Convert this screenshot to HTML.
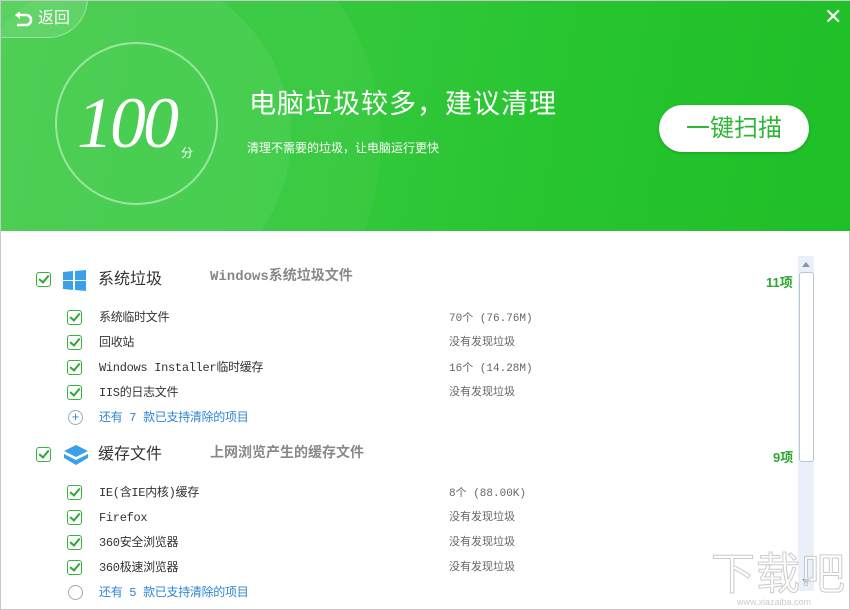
<!DOCTYPE html>
<html><head><meta charset="utf-8"><style>
*{margin:0;padding:0;box-sizing:border-box}
body{width:850px;height:610px;overflow:hidden;background:#fff;font-family:"Liberation Sans","Noto Sans CJK SC",sans-serif;position:relative;border:1px solid #c8c8c8;line-height:1}
.hd{position:absolute;left:0;top:0;width:850px;height:230px;background:linear-gradient(100deg,#3ccb44 0%,#33c83b 40%,#26c42e 70%,#1fbf28 100%);overflow:hidden}
.abs{position:absolute}
.cb{position:absolute;width:15px;height:15px;border:1px solid #35b53c;border-radius:3px;background:#fff}
.cb:after{content:"";position:absolute;left:4px;top:0px;width:4px;height:8px;border:solid #2aa830;border-width:0 2.5px 2.5px 0;transform:rotate(40deg)}
.t{position:absolute;font-size:12px;color:#333;font-family:"Liberation Mono","Noto Sans CJK SC",monospace;letter-spacing:-0.3px}
.g{position:absolute;font-size:11px;color:#666;font-family:"Liberation Mono","Noto Sans CJK SC",monospace}
</style></head><body>
<div class="hd">
 <div class="abs" style="left:-40px;top:-30px;width:330px;height:330px;border-radius:50%;background:rgba(255,255,255,0.06)"></div>
 <div class="abs" style="left:-120px;top:-110px;width:500px;height:500px;border-radius:50%;background:rgba(255,255,255,0.04)"></div>
 <div class="abs" style="left:-10px;top:-10px;width:97px;height:47px;border-radius:0 0 40px 0;background:rgba(255,255,255,0.12);border:1px solid rgba(255,255,255,0.35)"></div>
 <svg class="abs" style="left:13px;top:11px" width="20" height="15" viewBox="0 0 20 15"><path d="M4 3 H12 A5 5 0 0 1 12 13 H3" fill="none" stroke="#fff" stroke-width="2.6"/><path d="M1 3 L6 -1 V7 Z" fill="#fff"/></svg>
 <div class="abs" style="left:37px;top:10px;color:#fff;font-size:16px">返回</div>
 <div class="abs" style="left:54px;top:41px;width:163px;height:163px;border-radius:50%;border:2px solid rgba(255,255,255,0.45)"></div>
 <div class="abs" style="left:76px;top:86px;color:#fff;font-size:72px;font-style:italic;font-family:'Liberation Serif',serif;line-height:72px;letter-spacing:-3px">100</div>
 <div class="abs" style="left:180px;top:146px;color:#fff;font-size:12px">分</div>
 <div class="abs" style="left:248px;top:90px;color:#fff;font-size:27px;letter-spacing:1px">电脑垃圾较多，建议清理</div>
 <div class="abs" style="left:246px;top:141px;color:#fff;font-size:12px">清理不需要的垃圾，让电脑运行更快</div>
 <div class="abs" style="left:658px;top:104px;width:150px;height:47px;border-radius:24px;background:#fff;box-shadow:0 1px 3px rgba(0,0,0,0.2);color:#2fb537;font-size:24px;text-align:center;line-height:47px">一键扫描</div>
 <div class="abs" style="left:823px;top:5px;color:#fff;font-size:22px">✕</div>
</div>
<div class="cb" style="left:35px;top:271px"></div>
<svg class="abs" style="left:62px;top:269px" width="23" height="21"><path d="M0 2 L10 1 V10 H0Z M12 1 L23 0 V10 H12Z M0 11 H10 V20 L0 19Z M12 11 H23 V21 L12 20Z" fill="#3aa0e8"/></svg>
<div class="abs" style="left:97px;top:271px;font-size:16px;color:#333">系统垃圾</div>
<div class="abs" style="left:209px;top:269px;font-size:14px;color:#888;font-weight:bold;font-family:'Liberation Mono','Noto Sans CJK SC',monospace">Windows系统垃圾文件</div>
<div class="abs" style="left:765px;top:275px;font-size:13px;color:#2aa830;font-weight:bold">11项</div>
<div class="cb" style="left:66px;top:309px"></div><div class="t" style="left:98px;top:311px">系统临时文件</div><div class="g" style="left:448px;top:313px">70个 (76.76M)</div>
<div class="cb" style="left:66px;top:334px"></div><div class="t" style="left:98px;top:336px">回收站</div><div class="g" style="left:448px;top:337px">没有发现垃圾</div>
<div class="cb" style="left:66px;top:359px"></div><div class="t" style="left:98px;top:361px">Windows Installer临时缓存</div><div class="g" style="left:448px;top:363px">16个 (14.28M)</div>
<div class="cb" style="left:66px;top:384px"></div><div class="t" style="left:98px;top:386px">IIS的日志文件</div><div class="g" style="left:448px;top:387px">没有发现垃圾</div>
<div class="abs" style="left:67px;top:409px;width:15px;height:15px;border-radius:50%;border:1px solid #9ab;color:#2e86d6;font-size:13px;line-height:12px;text-align:center">+</div>
<div class="t" style="left:98px;top:411px;color:#2e86d6">还有 7 款已支持清除的项目</div>
<div class="cb" style="left:35px;top:446px"></div>
<svg class="abs" style="left:62px;top:443px" width="26" height="22"><path d="M13 1 L25 7 L13 13 L1 7Z" fill="#3aa0e8"/><path d="M1 10 L13 16 L25 10 V14 L13 21 L1 14Z" fill="#3aa0e8"/></svg>
<div class="abs" style="left:97px;top:446px;font-size:16px;color:#333">缓存文件</div>
<div class="abs" style="left:209px;top:444px;font-size:14px;color:#888;font-weight:bold">上网浏览产生的缓存文件</div>
<div class="abs" style="left:772px;top:450px;font-size:13px;color:#2aa830;font-weight:bold">9项</div>
<div class="cb" style="left:66px;top:484px"></div><div class="t" style="left:98px;top:486px">IE(含IE内核)缓存</div><div class="g" style="left:448px;top:488px">8个 (88.00K)</div>
<div class="cb" style="left:66px;top:509px"></div><div class="t" style="left:98px;top:511px">Firefox</div><div class="g" style="left:448px;top:512px">没有发现垃圾</div>
<div class="cb" style="left:66px;top:534px"></div><div class="t" style="left:98px;top:536px">360安全浏览器</div><div class="g" style="left:448px;top:537px">没有发现垃圾</div>
<div class="cb" style="left:66px;top:559px"></div><div class="t" style="left:98px;top:561px">360极速浏览器</div><div class="g" style="left:448px;top:562px">没有发现垃圾</div>
<div class="abs" style="left:67px;top:584px;width:15px;height:15px;border-radius:50%;border:1px solid #9ab"></div>
<div class="t" style="left:98px;top:586px;color:#2e86d6">还有 5 款已支持清除的项目</div>
<div class="abs" style="left:797px;top:255px;width:16px;height:335px;background:#eaf0fa"></div>
<div class="abs" style="left:801px;top:261px;width:0;height:0;border:4px solid transparent;border-bottom:5px solid #8895a8;border-top:0"></div>
<div class="abs" style="left:798px;top:271px;width:15px;height:190px;background:#fff;border:1px solid #b8c4d8;border-radius:3px"></div>
<div class="abs" style="left:801px;top:578px;width:0;height:0;border:4px solid transparent;border-top:5px solid #8895a8;border-bottom:0"></div>
<div class="abs" style="left:710px;top:552px;font-size:44px;color:rgba(255,255,255,0.5);-webkit-text-stroke:1px rgba(190,190,190,0.8);letter-spacing:1px">下载吧</div>
<div class="abs" style="left:736px;top:597px;font-size:9px;color:#ccc">www.xiazaiba.com</div>
</body></html>
